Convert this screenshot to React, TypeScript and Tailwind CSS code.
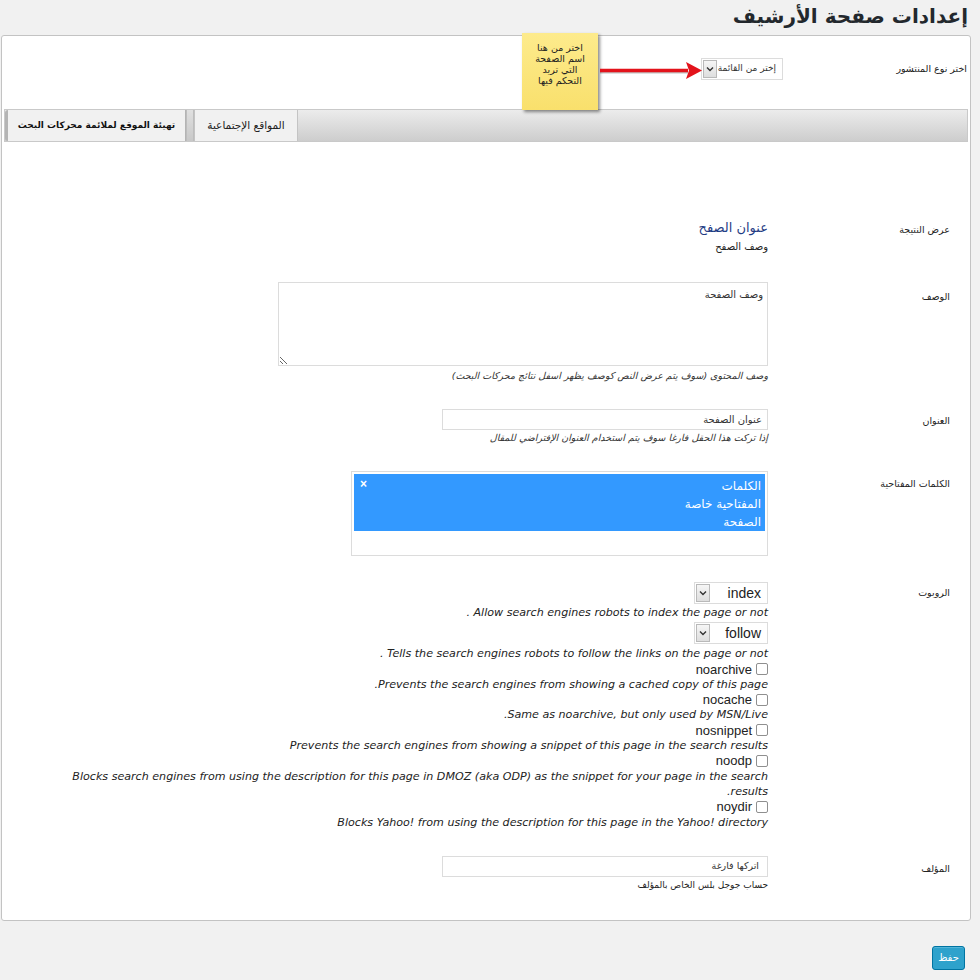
import type { ReactNode } from "react";

function Chevron() {
  return (
    <svg width="8" height="6" viewBox="0 0 8 6" className="text-[#333]">
      <polyline points="1,1.5 4,4.5 7,1.5" fill="none" stroke="currentColor" strokeWidth="1.4" />
    </svg>
  );
}

function Select({ text, className, textClass }: { text: string; className: string; textClass: string }) {
  return (
    <div className={`flex h-[22px] items-stretch border border-[#dcdcdc] bg-white ${className}`}>
      <span className={`flex flex-1 items-center whitespace-nowrap pr-[6px] ${textClass}`}>{text}</span>
      <span className="m-[1px] flex w-[14px] shrink-0 items-center justify-center border border-[#b9b9b9] bg-gradient-to-b from-[#f6f6f6] to-[#dedede]">
        <Chevron />
      </span>
    </div>
  );
}

function Row({ label, pt, children }: { label: string; pt: string; children: ReactNode }) {
  return (
    <div className="flex">
      <div className={`w-[202px] shrink-0 pr-[20px] text-[9.5px] leading-[16px] text-[#222] ${pt}`}>{label}</div>
      <div className="min-w-0 flex-1 pl-[70px]">{children}</div>
    </div>
  );
}

function Hint({ children, className = "" }: { children: ReactNode; className?: string }) {
  return <p className={`text-[9.5px] italic leading-[14px] text-[#333] ${className}`}>{children}</p>;
}

function Check({ label }: { label: string }) {
  return (
    <div className="flex h-[15.3px] items-center gap-[4px] font-['Liberation_Sans',sans-serif] text-[13px] text-[#222]">
      <span className="h-[12px] w-[12px] rounded-[2px] border border-[#8f8f8f] bg-white" />
      <span dir="ltr">{label}</span>
    </div>
  );
}

function En({ children }: { children: ReactNode }) {
  return <p className="text-[11.1px] italic leading-[15.3px] text-[#222]">{children}</p>;
}

const robotRules: { name: string; desc: string }[] = [
  { name: "noarchive", desc: "Prevents the search engines from showing a cached copy of this page." },
  { name: "nocache", desc: "Same as noarchive, but only used by MSN/Live." },
  { name: "nosnippet", desc: "Prevents the search engines from showing a snippet of this page in the search results" },
  {
    name: "noodp",
    desc: "Blocks search engines from using the description for this page in DMOZ (aka ODP) as the snippet for your page in the search results.",
  },
  { name: "noydir", desc: "Blocks Yahoo! from using the description for this page in the Yahoo! directory" },
];

export default function App() {
  return (
    <div
      dir="rtl"
      className="relative min-h-[980px] bg-[#f1f1f1] pl-[1px] pr-[9px] font-['DejaVu_Sans',sans-serif] text-[#222]"
    >
      <h1 className="h-[35px] whitespace-nowrap pr-[3px] text-[20px] font-bold leading-[32px] text-[#23282d]">
        إعدادات صفحة الأرشيف
      </h1>

      <div className="rounded-[3px] border border-[#c3c3c3] bg-white">
        <div className="flex h-[73px] items-start pt-[22px]">
          <div className="flex h-[22px] w-[187px] items-center pr-[3px] text-[9.5px] text-[#222]">اختر نوع المنتشور</div>
          <Select text="إختر من القائمة" className="w-[82px]" textClass="pr-[5px] text-[9px] text-[#333]" />
        </div>

        <div className="mx-[2px] flex h-[33px] justify-end border border-[#c9c9c9] bg-gradient-to-b from-[#ececec] to-[#cdcdcd]">
          <div className="flex w-[104px] items-center justify-center whitespace-nowrap border-x border-[#c4c4c4] bg-[#f1f1f1] text-[10.5px] text-[#222]">
            المواقع الإجتماعية
          </div>
          <div className="w-[8px] border-x border-[#bdbdbd] bg-gradient-to-b from-[#e0e0e0] to-[#c8c8c8]" />
          <div className="flex w-[181px] items-center justify-center whitespace-nowrap rounded-l-[3px] border-l-[3px] border-r border-[#b4b4b4] bg-[#f1f1f1] text-[9px] font-bold text-[#111]">
            تهيئة الموقع لملائمة محركات البحث
          </div>
        </div>

        <div className="flex flex-col gap-[26px] pb-[27px] pt-[76px]">
          <Row label="عرض النتيجة" pt="pt-[4px]">
            <p className="text-[13px] leading-[19px] text-[#1f3c84]">عنوان الصفح</p>
            <p className="text-[10px] leading-[19px] text-[#222]">وصف الصفح</p>
          </Row>

          <Row label="الوصف" pt="pt-[7px]">
            <textarea
              dir="rtl"
              defaultValue="وصف الصفحة"
              className="block h-[84px] w-[490px] resize border border-[#dcdcdc] bg-white px-[4px] py-[4px] text-[10px] text-[#333] outline-none"
            />
            <Hint className="mt-[3px]">وصف المحتوى (سوف يتم عرض النص كوصف يظهر اسفل نتائج محركات البحث)</Hint>
          </Row>

          <Row label="العنوان" pt="pt-[4px]">
            <div className="flex h-[21px] w-[326px] items-center border border-[#dcdcdc] bg-white pr-[5px] text-[10px] text-[#333]">
              عنوان الصفحة
            </div>
            <Hint className="mt-[1px]">إذا تركت هذا الحقل فارغا سوف يتم استخدام العنوان الإفتراضي للمقال</Hint>
          </Row>

          <Row label="الكلمات المفتاحية" pt="pt-[5px]">
            <div className="h-[85px] w-[417px] border border-[#dcdcdc] bg-white p-[2px]">
              <div className="flex h-[57px] justify-between bg-[#3399ff] pl-[6px] pr-[4px] pt-[3px] text-white">
                <div className="text-[12px] leading-[18px]">
                  <p>الكلمات</p>
                  <p>المفتاحية خاصة</p>
                  <p>الصفحة</p>
                </div>
                <span className="font-['Liberation_Sans',sans-serif] text-[12px] font-bold leading-[14px]">×</span>
              </div>
            </div>
          </Row>

          <Row label="الروبوت" pt="pt-[3px]">
            <Select text="index" className="w-[74px]" textClass="font-['Liberation_Sans',sans-serif] text-[14px] text-[#222]" />
            <div className="mt-[1px]">
              <En>Allow search engines robots to index the page or not .</En>
            </div>
            <Select text="follow" className="mt-[2px] w-[74px]" textClass="font-['Liberation_Sans',sans-serif] text-[14px] text-[#222]" />
            <div className="mt-[2px]">
              <En>Tells the search engines robots to follow the links on the page or not .</En>
              {robotRules.map((rule) => (
                <div key={rule.name}>
                  <Check label={rule.name} />
                  <En>{rule.desc}</En>
                </div>
              ))}
            </div>
          </Row>

          <Row label="المؤلف" pt="pt-[5px]">
            <div className="flex h-[21px] w-[326px] items-center border border-[#dcdcdc] bg-white pr-[8px] text-[9.5px] text-[#333]">
              اتركها فارغة
            </div>
            <p className="mt-[1px] text-[9px] leading-[15px] text-[#222]">حساب جوجل بلس الخاص بالمؤلف</p>
          </Row>
        </div>
      </div>

      <div className="flex pr-[6px] pt-[25px]">
        <button
          type="button"
          className="h-[24px] w-[33px] rounded-[3px] border border-[#0074a2] bg-[#2ea2cc] text-[10px] text-white shadow-[inset_0_1px_0_rgba(120,200,230,0.5)]"
        >
          حفظ
        </button>
      </div>

      <div className="absolute left-[522px] top-[33px] h-[77px] w-[76px] bg-gradient-to-b from-[#fdeb8c] to-[#f9e06c] pt-[9px] text-center text-[9.5px] leading-[11px] text-[#222] shadow-[2px_2px_3px_rgba(0,0,0,0.45)]">
        <p>اختر من هنا</p>
        <p>اسم الصفحة</p>
        <p>التي تريد</p>
        <p>التحكم فيها</p>
      </div>

      <svg className="absolute left-[598px] top-[60px]" width="106" height="22" viewBox="0 0 106 22">
        <line x1="2" y1="12" x2="90" y2="12" stroke="rgba(0,0,0,0.25)" strokeWidth="3" />
        <line x1="2" y1="10.5" x2="90" y2="10.5" stroke="#e3131b" strokeWidth="3.5" />
        <polygon points="88,2 104,10.5 88,19 91,10.5" fill="#e3131b" />
      </svg>
    </div>
  );
}
